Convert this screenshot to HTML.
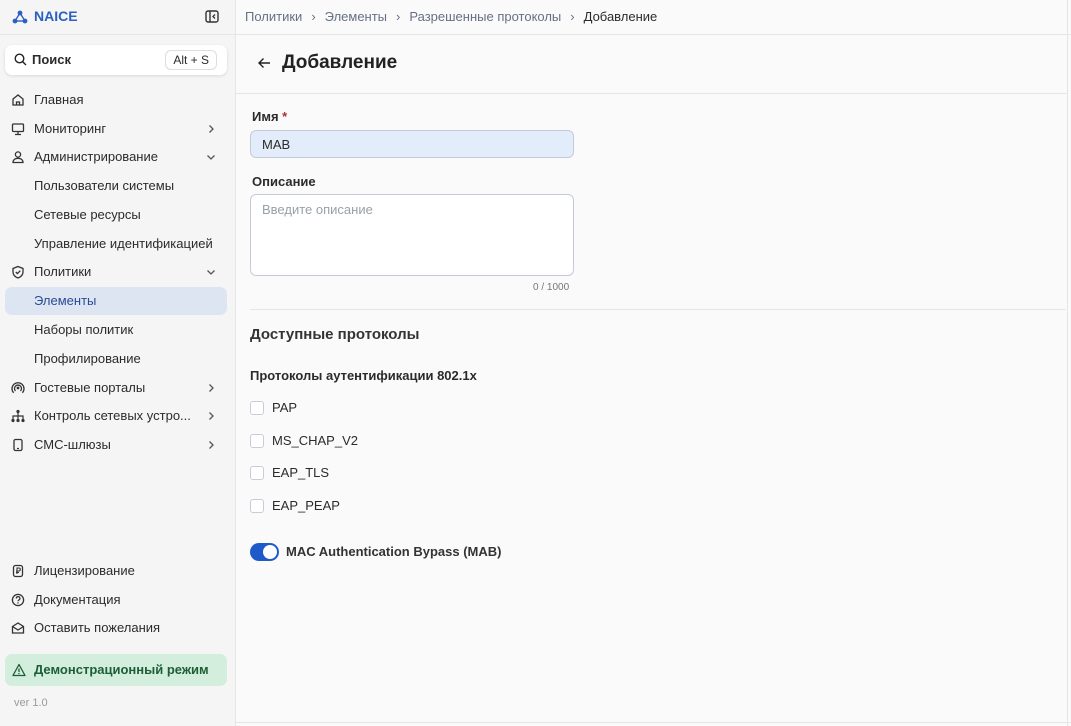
<!DOCTYPE html>
<html><head><meta charset="utf-8"><style>
*{box-sizing:border-box;margin:0;padding:0}
body{width:1071px;height:726px;overflow:hidden;background:#fafafa;font-family:"Liberation Sans","Noto Sans CJK SC",sans-serif;font-size:13px;color:#2b2b2b;position:relative}
.side{position:absolute;left:0;top:0;width:236px;height:726px;background:#f5f5f5;border-right:1px solid #e6e6e6}
.logo{height:35px;border-bottom:1px solid #e6e6e6;position:relative}
.logo span{position:absolute;left:34px;top:8px;font-weight:bold;color:#2b5fc4;font-size:14px}
.search{position:absolute;left:5px;top:45px;width:222px;height:30px;background:#fff;border-radius:7px;box-shadow:0 1px 3px rgba(0,0,0,.12)}
.search b{position:absolute;left:27px;top:7px;font-size:13px}
.kbd{position:absolute;right:10px;top:5px;border:1px solid #ddd;border-radius:6px;padding:2px 7px;font-size:12px}
.it{position:absolute;left:0;width:236px;height:28px;line-height:28px;padding-left:34px;color:#2b2b2b}
.it svg.ic{position:absolute;left:11px;top:7px}
.chev{position:absolute;left:206px;top:9px}
.sel{left:5px;width:222px;padding-left:29px;background:#dde5f2;border-radius:7px;color:#2a4b96}
.demo{position:absolute;left:5px;top:654px;width:222px;height:32px;background:#d3eedd;border-radius:7px;color:#1d5e37;font-weight:bold;line-height:32px;padding-left:29px}
.ver{position:absolute;left:14px;top:697px;color:#9a9a9a;font-size:11px}
.crumb{position:absolute;left:236px;top:0;right:0;height:35px;border-bottom:1px solid #e6e6e6;padding:9px 0 0 9px;color:#667085}
.crumb i{font-style:normal;margin:0 9px;color:#667085}
.title{position:absolute;left:236px;top:35px;right:4px;height:59px;border-bottom:1px solid #e6e6e6}
.title span{position:absolute;left:46px;top:17px;font-size:19px;font-weight:bold;color:#222}
.lbl{position:absolute;left:252px;font-weight:bold}
.inp{position:absolute;left:250px;width:324px;border:1px solid #c5cbd6;border-radius:6px}
.cb{position:absolute;left:250px;width:14px;height:14px;border:1px solid #c8ccd4;border-radius:3px;background:#fff}
.cbt{position:absolute;left:272px}
</style></head><body>
<div class="side">
 <div class="logo">
  <svg style="position:absolute;left:12px;top:10px" width="16" height="14" viewBox="0 0 16 14"><g stroke="#2b5fc4" stroke-width="1.4"><line x1="8" y1="3" x2="3" y2="11"/><line x1="8" y1="3" x2="13" y2="11"/><line x1="3" y1="11" x2="13" y2="11"/></g><circle cx="8" cy="3" r="2.4" fill="#2b5fc4"/><circle cx="3" cy="11" r="2.4" fill="#2b5fc4"/><circle cx="13" cy="11" r="2.4" fill="#2b5fc4"/></svg>
  <span>NAICE</span>
  <svg style="position:absolute;left:205px;top:10px" width="14" height="13" viewBox="0 0 14 13"><rect x="1" y="1" width="12" height="11" rx="2" fill="none" stroke="#333" stroke-width="1.4"/><line x1="5" y1="1" x2="5" y2="12" stroke="#333" stroke-width="1.4"/><path d="M10 4.5L8 6.5 10 8.5" fill="none" stroke="#333" stroke-width="1.3"/></svg>
 </div>
 <div class="search"><svg style="position:absolute;left:9px;top:8px" width="13" height="13" viewBox="0 0 13 13"><circle cx="5.5" cy="5.5" r="4.3" fill="none" stroke="#222" stroke-width="1.4"/><line x1="8.7" y1="8.7" x2="12" y2="12" stroke="#222" stroke-width="1.4"/></svg><b>Поиск</b><span class="kbd">Alt + S</span></div>
 <div class="it" style="top:86px"><svg class="ic" width="14" height="14" viewBox="0 0 14 14"><path d="M2 6L7 2l5 4v6H2z M5.5 12V9h3v3" fill="none" stroke="#333" stroke-width="1.3"/></svg>Главная</div>
 <div class="it" style="top:115px"><svg class="ic" width="14" height="14" viewBox="0 0 14 14"><rect x="1.5" y="2" width="11" height="7.5" rx="1" fill="none" stroke="#333" stroke-width="1.3"/><path d="M7 9.5v2.5M4 12.5h6" stroke="#333" stroke-width="1.3"/></svg>Мониторинг<svg class="chev" width="10" height="10" viewBox="0 0 10 10"><path d="M3.5 1.5L7 5 3.5 8.5" fill="none" stroke="#555" stroke-width="1.3"/></svg></div>
 <div class="it" style="top:143px"><svg class="ic" width="14" height="14" viewBox="0 0 14 14"><circle cx="7" cy="4.5" r="2.6" fill="none" stroke="#333" stroke-width="1.3"/><path d="M2 12.5c0-3 2.5-4.2 5-4.2s5 1.2 5 4.2z" fill="none" stroke="#333" stroke-width="1.3"/></svg>Администрирование<svg class="chev" width="10" height="10" viewBox="0 0 10 10"><path d="M1.5 3.5L5 7 8.5 3.5" fill="none" stroke="#555" stroke-width="1.3"/></svg></div>
 <div class="it" style="top:172px">Пользователи системы</div>
 <div class="it" style="top:201px">Сетевые ресурсы</div>
 <div class="it" style="top:230px">Управление идентификацией</div>
 <div class="it" style="top:258px"><svg class="ic" width="14" height="14" viewBox="0 0 14 14"><path d="M7 1.5l5 2v3.5c0 3-2.3 5-5 6-2.7-1-5-3-5-6V3.5z" fill="none" stroke="#333" stroke-width="1.3"/><path d="M4.8 7l1.6 1.6L9.3 5.7" fill="none" stroke="#333" stroke-width="1.3"/></svg>Политики<svg class="chev" width="10" height="10" viewBox="0 0 10 10"><path d="M1.5 3.5L5 7 8.5 3.5" fill="none" stroke="#555" stroke-width="1.3"/></svg></div>
 <div class="it sel" style="top:287px">Элементы</div>
 <div class="it" style="top:316px">Наборы политик</div>
 <div class="it" style="top:345px">Профилирование</div>
 <div class="it" style="top:374px"><svg class="ic" width="14" height="14" viewBox="0 0 14 14"><circle cx="7" cy="7" r="1.4" fill="#333"/><path d="M4.5 10a3.5 3.5 0 1 1 5 0M2.6 11.8a6 6 0 1 1 8.8 0" fill="none" stroke="#333" stroke-width="1.3"/></svg>Гостевые порталы<svg class="chev" width="10" height="10" viewBox="0 0 10 10"><path d="M3.5 1.5L7 5 3.5 8.5" fill="none" stroke="#555" stroke-width="1.3"/></svg></div>
 <div class="it" style="top:402px"><svg class="ic" width="14" height="14" viewBox="0 0 14 14"><circle cx="7" cy="2.5" r="1.6" fill="#333"/><circle cx="2" cy="11.5" r="1.6" fill="#333"/><circle cx="7" cy="11.5" r="1.6" fill="#333"/><circle cx="12" cy="11.5" r="1.6" fill="#333"/><path d="M7 3v8M2 11V7h10v4" fill="none" stroke="#333" stroke-width="1.2"/></svg>Контроль сетевых устро...<svg class="chev" width="10" height="10" viewBox="0 0 10 10"><path d="M3.5 1.5L7 5 3.5 8.5" fill="none" stroke="#555" stroke-width="1.3"/></svg></div>
 <div class="it" style="top:431px"><svg class="ic" width="14" height="14" viewBox="0 0 14 14"><rect x="3" y="1.5" width="8" height="11" rx="1.5" fill="none" stroke="#333" stroke-width="1.3"/><line x1="6" y1="10.5" x2="8" y2="10.5" stroke="#333" stroke-width="1.2"/></svg>СМС-шлюзы<svg class="chev" width="10" height="10" viewBox="0 0 10 10"><path d="M3.5 1.5L7 5 3.5 8.5" fill="none" stroke="#555" stroke-width="1.3"/></svg></div>
 <div class="it" style="top:557px"><svg class="ic" width="14" height="14" viewBox="0 0 14 14"><rect x="2.5" y="1.5" width="9" height="11" rx="2" fill="none" stroke="#333" stroke-width="1.3"/><path d="M6 10V4h1.8a1.5 1.5 0 0 1 0 3H5M5 8.5h3" fill="none" stroke="#333" stroke-width="1.1"/></svg>Лицензирование</div>
 <div class="it" style="top:586px"><svg class="ic" width="14" height="14" viewBox="0 0 14 14"><circle cx="7" cy="7" r="5.6" fill="none" stroke="#333" stroke-width="1.3"/><path d="M5.3 5.5a1.8 1.8 0 1 1 2.4 1.6c-.5.3-.7.6-.7 1.2" fill="none" stroke="#333" stroke-width="1.2"/><circle cx="7" cy="10" r=".7" fill="#333"/></svg>Документация</div>
 <div class="it" style="top:614px"><svg class="ic" width="14" height="14" viewBox="0 0 14 14"><path d="M1.5 5.5L7 2l5.5 3.5V12h-11z M1.5 5.5L7 9l5.5-3.5" fill="none" stroke="#333" stroke-width="1.3"/></svg>Оставить пожелания</div>
 <div class="demo"><svg style="position:absolute;left:7px;top:9px" width="14" height="14" viewBox="0 0 14 14"><path d="M7 1.5L13 12.5H1z" fill="none" stroke="#1d5e37" stroke-width="1.3" stroke-linejoin="round"/><path d="M7 5.5v3.5" stroke="#1d5e37" stroke-width="1.3"/><circle cx="7" cy="10.6" r=".7" fill="#1d5e37"/></svg>Демонстрационный режим</div>
 <div class="ver">ver 1.0</div>
</div>
<div class="crumb">Политики<i>›</i>Элементы<i>›</i>Разрешенные протоколы<i>›</i><span style="color:#2b2b2b">Добавление</span></div>
<div class="title"><svg style="position:absolute;left:21px;top:22px" width="14" height="12" viewBox="0 0 14 12"><path d="M13 6H2M6.5 1.5L2 6l4.5 4.5" fill="none" stroke="#222" stroke-width="1.4"/></svg><span>Добавление</span></div>
<div style="position:absolute;left:1067px;top:0;width:1px;height:726px;background:#e6e6e6"></div>
<div style="position:absolute;left:236px;top:722px;width:835px;height:1px;background:#e6e6e6"></div>
<div class="lbl" style="top:109px">Имя <span style="color:#a33">*</span></div>
<div class="inp" style="top:130px;height:28px;background:#e3ecfa;padding:6px 11px">MAB</div>
<div class="lbl" style="top:174px">Описание</div>
<div class="inp" style="top:194px;height:82px;background:#fff;padding:7px 11px;color:#9aa0a8">Введите описание</div>
<div style="position:absolute;left:533px;top:282px;font-size:10px;color:#777">0 / 1000</div>
<div style="position:absolute;left:250px;top:309px;width:816px;height:1px;background:#e6e6e6"></div>
<div style="position:absolute;left:250px;top:326px;font-size:15px;font-weight:bold;color:#333">Доступные протоколы</div>
<div style="position:absolute;left:250px;top:368px;font-weight:bold">Протоколы аутентификации 802.1x</div>
<div class="cb" style="top:401px"></div><div class="cbt" style="top:400px">PAP</div>
<div class="cb" style="top:434px"></div><div class="cbt" style="top:433px">MS_CHAP_V2</div>
<div class="cb" style="top:466px"></div><div class="cbt" style="top:465px">EAP_TLS</div>
<div class="cb" style="top:499px"></div><div class="cbt" style="top:498px">EAP_PEAP</div>
<div style="position:absolute;left:250px;top:543px;width:29px;height:18px;border-radius:9px;background:#1f5acb"><div style="position:absolute;right:2px;top:2px;width:14px;height:14px;border-radius:50%;background:#fff"></div></div>
<div style="position:absolute;left:286px;top:544px;font-weight:bold;color:#333">MAC Authentication Bypass (MAB)</div>
</body></html>
